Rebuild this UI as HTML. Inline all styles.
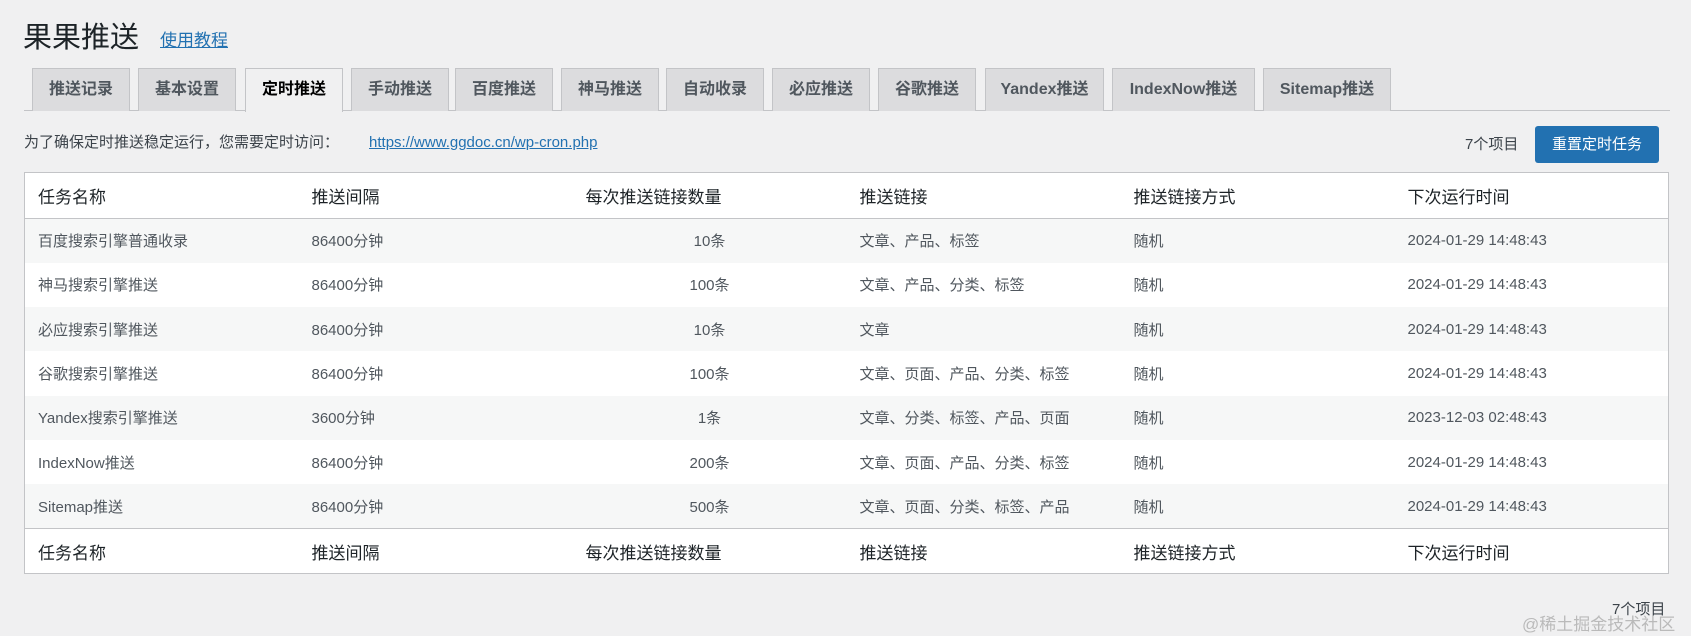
<!DOCTYPE html>
<html><head><meta charset="utf-8"><style>
*{margin:0;padding:0;box-sizing:border-box}
body{width:1691px;height:636px;background:#f0f0f1;font-family:"Liberation Sans","Noto Sans CJK SC",sans-serif;color:#3c434a;position:relative;overflow:hidden}
.abs{position:absolute;white-space:nowrap}
h1{position:absolute;left:23px;top:14px;font-size:29px;font-weight:400;color:#1d2327}
.tut{left:160px;top:26px;font-size:17px;color:#2271b1;text-decoration:underline}
.tabs{position:absolute;left:24px;top:68px;width:1646px;height:43px;border-bottom:1px solid #c3c4c7}
.tab{position:absolute;top:0;height:43px;background:#dcdcde;border:1px solid #c3c4c7;border-bottom:none;font-size:16px;font-weight:700;color:#50575e;text-align:center;line-height:42px}
.tab.act{background:#f0f0f1;color:#000;height:44px}
.note{left:24px;top:131px;font-size:15px;color:#3c434a}
.note a{color:#2271b1;margin-left:30px;text-decoration:underline}
.cnt{left:1465px;top:133px;font-size:15px;color:#3c434a}
.btn{position:absolute;left:1535px;top:126px;width:124px;height:37px;background:#2271b1;border-radius:3px;color:#fff;font-size:15px;text-align:center;line-height:37px}
table{position:absolute;left:24px;top:172px;width:1645px;border:1px solid #c3c4c7;border-collapse:collapse;background:#fff}
td,th{font-weight:400;text-align:left;padding:0 0 0 13px;white-space:nowrap}
th{font-size:17px;color:#1d2327;height:46px}
thead th{border-bottom:1px solid #c3c4c7}
tfoot th{border-top:1px solid #c3c4c7;height:45px}
td{font-size:15px;color:#50575e;height:44.3px}
tbody tr:nth-child(odd){background:#f6f7f7}
.c3{text-align:center;padding-left:0}
th.c3{text-align:left;padding-left:13px}
.wm{left:1522px;top:610px;font-size:17px;color:rgba(150,150,150,.6)}
.cnt2{left:1612px;top:598px;font-size:15px;color:#3c434a}
</style></head><body>
<h1>果果推送</h1>
<a class="abs tut">使用教程</a>
<div class="tabs">
<div class="tab" style="left:8px;width:98px">推送记录</div>
<div class="tab" style="left:114px;width:98px">基本设置</div>
<div class="tab act" style="left:221px;width:98px">定时推送</div>
<div class="tab" style="left:327px;width:98px">手动推送</div>
<div class="tab" style="left:431px;width:98px">百度推送</div>
<div class="tab" style="left:537px;width:98px">神马推送</div>
<div class="tab" style="left:642px;width:98px">自动收录</div>
<div class="tab" style="left:748px;width:98px">必应推送</div>
<div class="tab" style="left:854px;width:98px">谷歌推送</div>
<div class="tab" style="left:961px;width:119px">Yandex推送</div>
<div class="tab" style="left:1088px;width:143px">IndexNow推送</div>
<div class="tab" style="left:1239px;width:128px">Sitemap推送</div>
</div>
<div class="abs note">为了确保定时推送稳定运行，您需要定时访问：<a>https://www.ggdoc.cn/wp-cron.php</a></div>
<div class="abs cnt">7个项目</div>
<div class="btn">重置定时任务</div>
<table>
<colgroup><col style="width:274px"><col style="width:274px"><col style="width:274px"><col style="width:274px"><col style="width:274px"><col></colgroup>
<thead><tr><th>任务名称</th><th>推送间隔</th><th class="c3">每次推送链接数量</th><th>推送链接</th><th>推送链接方式</th><th>下次运行时间</th></tr></thead>
<tbody>
<tr><td>百度搜索引擎普通收录</td><td>86400分钟</td><td class="c3">10条</td><td>文章、产品、标签</td><td>随机</td><td>2024-01-29 14:48:43</td></tr>
<tr><td>神马搜索引擎推送</td><td>86400分钟</td><td class="c3">100条</td><td>文章、产品、分类、标签</td><td>随机</td><td>2024-01-29 14:48:43</td></tr>
<tr><td>必应搜索引擎推送</td><td>86400分钟</td><td class="c3">10条</td><td>文章</td><td>随机</td><td>2024-01-29 14:48:43</td></tr>
<tr><td>谷歌搜索引擎推送</td><td>86400分钟</td><td class="c3">100条</td><td>文章、页面、产品、分类、标签</td><td>随机</td><td>2024-01-29 14:48:43</td></tr>
<tr><td>Yandex搜索引擎推送</td><td>3600分钟</td><td class="c3">1条</td><td>文章、分类、标签、产品、页面</td><td>随机</td><td>2023-12-03 02:48:43</td></tr>
<tr><td>IndexNow推送</td><td>86400分钟</td><td class="c3">200条</td><td>文章、页面、产品、分类、标签</td><td>随机</td><td>2024-01-29 14:48:43</td></tr>
<tr><td>Sitemap推送</td><td>86400分钟</td><td class="c3">500条</td><td>文章、页面、分类、标签、产品</td><td>随机</td><td>2024-01-29 14:48:43</td></tr>
</tbody>
<tfoot><tr><th>任务名称</th><th>推送间隔</th><th class="c3">每次推送链接数量</th><th>推送链接</th><th>推送链接方式</th><th>下次运行时间</th></tr></tfoot>
</table>
<div class="abs cnt2">7个项目</div>
<div class="abs wm">@稀土掘金技术社区</div>
</body></html>
